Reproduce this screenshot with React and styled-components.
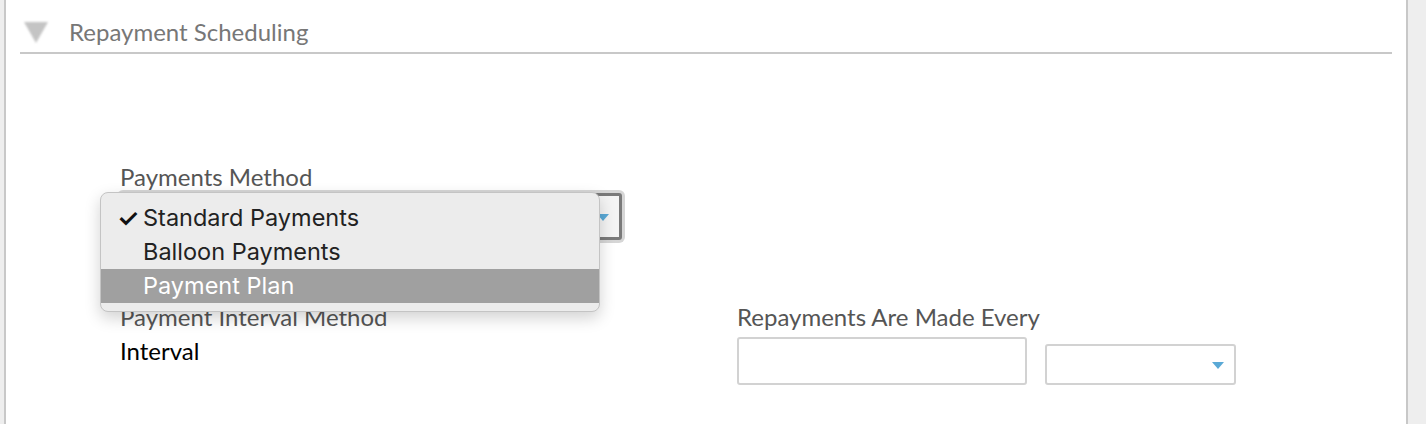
import React from "react";
import styled, { createGlobalStyle } from "styled-components";

const Global = createGlobalStyle`
  html, body {
    margin: 0;
    padding: 0;
    background: #eeeeee;
    font-family: Lato, "Open Sans", sans-serif;
  }
`;

const Panel = styled.div`
  margin-left: 4px;
  width: 1404px;
  height: 424px;
  box-sizing: border-box;
  background: #ffffff;
  border-left: 2px solid #c8c8c8;
  border-right: 2px solid #c8c8c8;
  padding: 0 14px;
  overflow: hidden;
`;

const Header = styled.div`
  display: flex;
  align-items: center;
  gap: 21px;
  height: 54px;
  padding: 10px 0 0 4px;
  box-sizing: border-box;
  border-bottom: 2px solid #c8c8c8;
`;

const Caret = styled.span`
  width: 0;
  height: 0;
  margin-top: 2px;
  border-left: 12px solid transparent;
  border-right: 12px solid transparent;
  border-top: 21px solid #c4c4c4;
  filter: blur(0.8px);
`;

const Title = styled.h3`
  margin: 0;
  font-size: 24px;
  font-weight: 400;
  color: #777777;
`;

const Form = styled.div`
  display: grid;
  grid-template-columns: 617px 1fr;
  row-gap: 63px;
  padding: 109px 0 0 100px;
`;

const Field = styled.div`
  position: relative;
  display: flex;
  flex-direction: column;
`;

const Label = styled.label`
  font-size: 24px;
  color: #555555;
  line-height: 28px;
`;

const Value = styled.div`
  font-size: 24px;
  color: #000000;
  line-height: 28px;
  margin-top: 6px;
`;

const Select = styled.div`
  position: relative;
  box-sizing: border-box;
  width: ${(p) => p.$width}px;
  height: ${(p) => p.$height}px;
  margin-top: ${(p) => p.$top || 0}px;
  border-radius: 3px;
  border: ${(p) => (p.$focused ? "3px solid #7a7a7a" : "2px solid #d2d2d2")};
  box-shadow: ${(p) => (p.$focused ? "0 0 0 3px #d6d6d6" : "none")};
  background: ${(p) => (p.$focused ? "#f4f4f4" : "#ffffff")};

  &::after {
    content: "";
    position: absolute;
    right: 10px;
    top: 50%;
    margin-top: -3px;
    border-left: 6px solid transparent;
    border-right: 6px solid transparent;
    border-top: 7px solid #5aa9d6;
  }
`;

const Inputs = styled.div`
  display: flex;
  align-items: flex-end;
  gap: 18px;
  margin-top: 6px;
`;

const Input = styled.div`
  box-sizing: border-box;
  width: 290px;
  height: 48px;
  border: 2px solid #d2d2d2;
  border-radius: 3px;
  background: #ffffff;
`;

const Menu = styled.ul`
  position: absolute;
  left: -20px;
  top: 29px;
  width: 500px;
  margin: 0;
  padding: 8px 0 8px;
  list-style: none;
  box-sizing: border-box;
  background: #ececec;
  border: 1px solid #c4c4c4;
  border-radius: 8px;
  box-shadow: 0 6px 16px rgba(0, 0, 0, 0.18);
  font-family: Inter, "Noto Sans", sans-serif;
  z-index: 2;
`;

const Option = styled.li`
  position: relative;
  height: 34px;
  line-height: 34px;
  padding-left: 42px;
  font-size: 23.5px;
  color: ${(p) => (p.$active ? "#ffffff" : "#222222")};
  background: ${(p) => (p.$active ? "#a0a0a0" : "transparent")};
`;

const Check = styled.span`
  position: absolute;
  left: 16px;
  top: 0;
  font-size: 25px;
  font-weight: 600;
  color: #111111;
`;

const options = [
  { label: "Standard Payments", checked: true },
  { label: "Balloon Payments" },
  { label: "Payment Plan", active: true },
];

export default function App() {
  return (
    <>
      <Global />
      <Panel>
        <Header>
          <Caret />
          <Title>Repayment Scheduling</Title>
        </Header>
        <Form>
          <Field>
            <Label>Payments Method</Label>
            <Select $width={502} $height={47} $top={2} $focused />
            <Menu>
              {options.map((o) => (
                <Option key={o.label} $active={o.active}>
                  {o.checked && <Check>✓</Check>}
                  {o.label}
                </Option>
              ))}
            </Menu>
          </Field>
          <div />
          <Field>
            <Label>Payment Interval Method</Label>
            <Value>Interval</Value>
          </Field>
          <Field>
            <Label>Repayments Are Made Every</Label>
            <Inputs>
              <Input />
              <Select $width={191} $height={41} />
            </Inputs>
          </Field>
        </Form>
      </Panel>
    </>
  );
}
